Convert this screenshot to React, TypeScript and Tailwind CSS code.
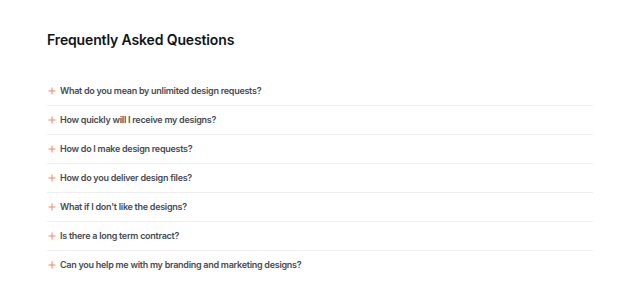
const questions = [
  "What do you mean by unlimited design requests?",
  "How quickly will I receive my designs?",
  "How do I make design requests?",
  "How do you deliver design files?",
  "What if I don't like the designs?",
  "Is there a long term contract?",
  "Can you help me with my branding and marketing designs?",
];

function PlusIcon() {
  return (
    <svg width="8" height="8" viewBox="0 0 8 8" className="shrink-0 text-[#f0866a]">
      <path d="M4 0.5V7.5M0.5 4H7.5" stroke="currentColor" strokeWidth="1" />
    </svg>
  );
}

export default function App() {
  return (
    <div className="min-h-screen bg-white font-['Inter',sans-serif]">
      <div className="px-[47px] pt-[30px]">
        <h1 className="text-[14px] leading-[20px] font-semibold tracking-[-0.01em] text-[#111418]">
          Frequently Asked Questions
        </h1>
        <div className="mt-[27px] flex flex-col">
          {questions.map((q, i) => (
            <div
              key={q}
              className={
                i < questions.length - 1
                  ? "flex h-[29px] items-start gap-[4px] border-b border-[#efefef] pl-[1px] pt-[6px]"
                  : "flex h-[29px] items-start gap-[4px] pl-[1px] pt-[6px]"
              }
            >
              <span className="flex h-[15px] items-center">
                <PlusIcon />
              </span>
              <span className="text-[9px] leading-[15px] font-semibold tracking-[-0.03em] text-[#474b53]">{q}</span>
            </div>
          ))}
        </div>
      </div>
    </div>
  );
}
